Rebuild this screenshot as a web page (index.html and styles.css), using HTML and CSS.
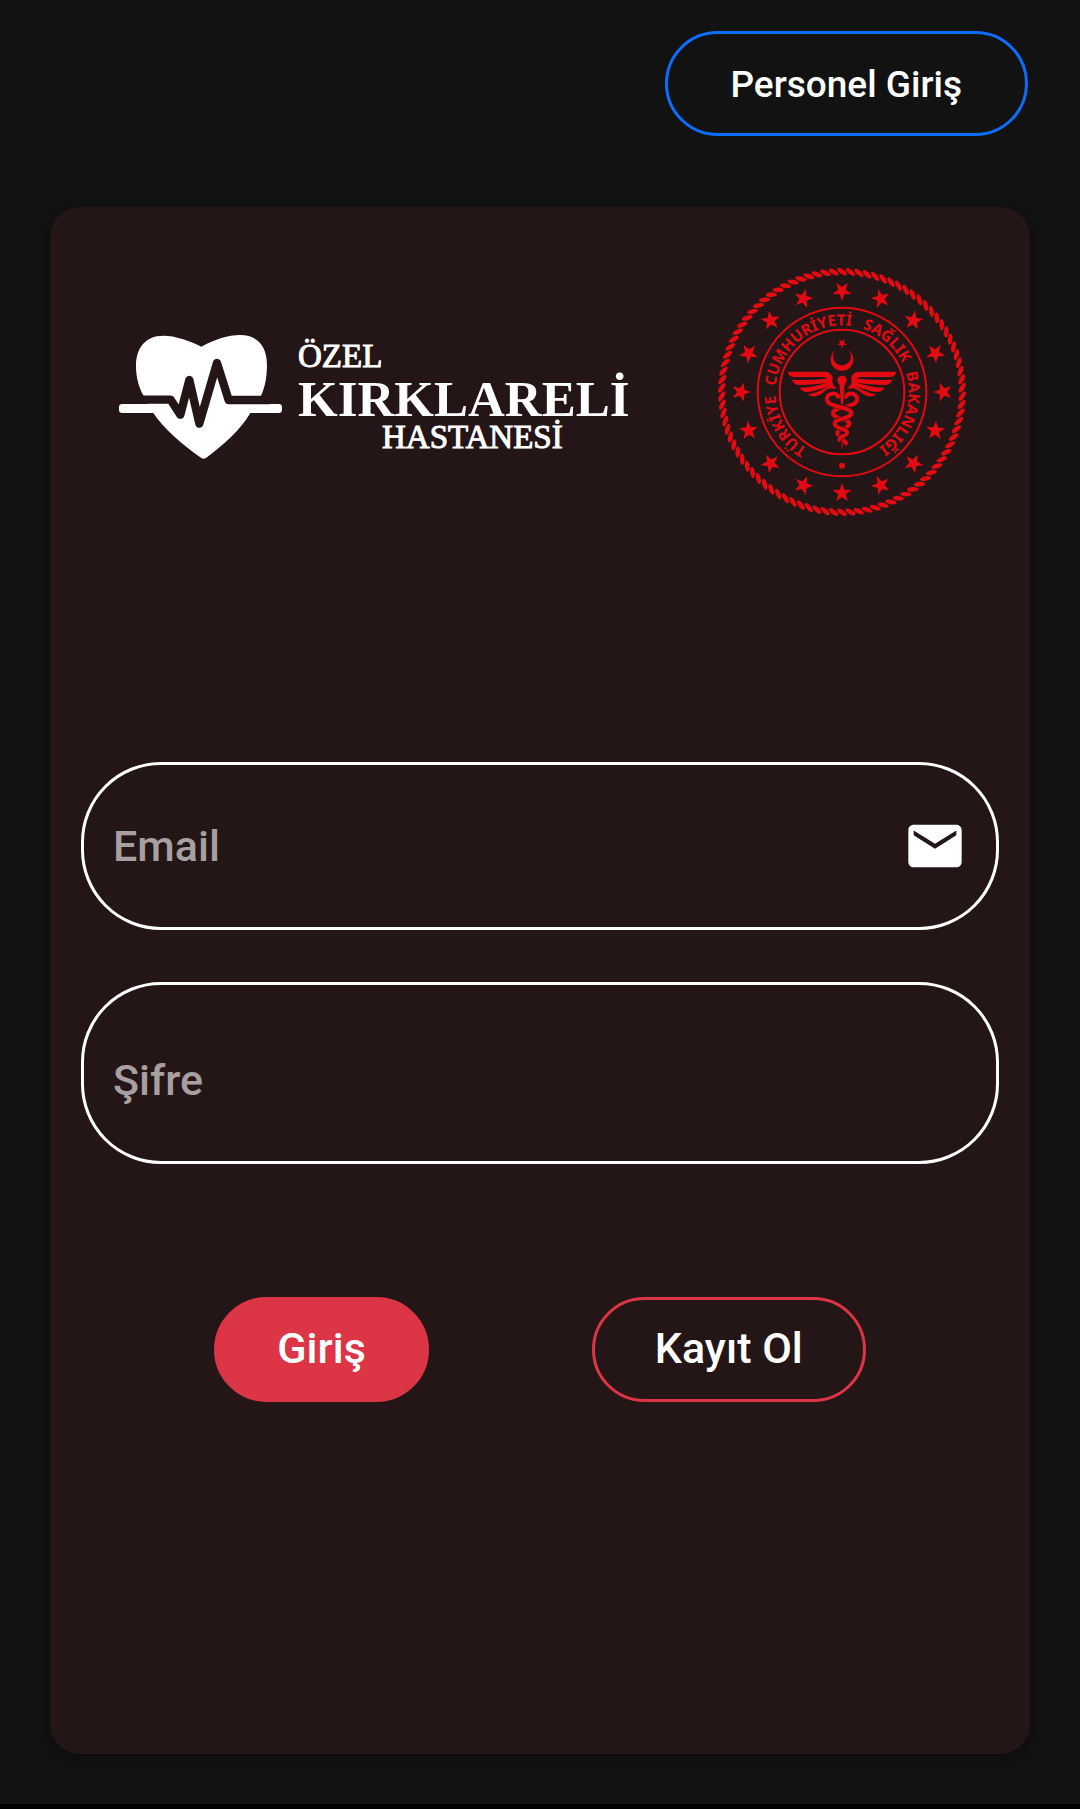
FILE: index.html
```html
<!DOCTYPE html>
<html lang="tr">
<head>
<meta charset="utf-8">
<meta name="viewport" content="width=device-width, initial-scale=1">
<title>Özel Kırklareli Hastanesi</title>
<link rel="stylesheet" href="styles.css">
</head>
<body>
<div class="page">
  <header class="topbar">
    <button type="button" class="btn btn-staff">Personel Giriş</button>
  </header>
  <main class="card">
    <div class="logos">
      <svg class="hospital-logo" viewBox="0 0 520 135" role="img" aria-label="Özel Kırklareli Hastanesi">
        <g transform="translate(-18 -15) scale(.3333)">
          <path fill="#fff" d="M304 110C270 92 225 77 190 77C135 77 108 115 108 168C108 200 116 232 130 256L160 309C190 355 245 402 304 444Q311 449 318 444C370 405 422 360 451 309L481 262C495 235 501 200 501 165C501 108 472 75 420 75C385 75 345 88 304 110Z"/>
          <rect x="57" y="282" width="489" height="27" rx="10" fill="#fff"/>
          <path class="pulse" d="M90 269H212L241 314L268 210L298 341L351 159L386 270H510"/>
        </g>
        <text class="word word-small" x="180" y="42">ÖZEL</text>
        <text class="word word-large" x="180" y="91">KIRKLARELİ</text>
        <text class="word word-small" x="264" y="123">HASTANESİ</text>
      </svg>
      <svg class="ministry-logo" viewBox="-372 -372 744 744" role="img" aria-label="Türkiye Cumhuriyeti Sağlık Bakanlığı">
        <defs>
          <path id="star" d="M0 30L-7 9.600L-28.500 9.300L-11.400 -3.700L-17.600 -24.300L0 -12L17.600 -24.300L11.400 -3.700L28.500 9.300L7 9.600Z"/>
          <ellipse id="strand" cx="0" cy="-361" rx="17" ry="7" transform="rotate(34 0 -361)"/>
          <g id="rope">
            <use href="#strand"/>
            <use href="#strand" transform="rotate(4)"/>
            <use href="#strand" transform="rotate(8)"/>
            <use href="#strand" transform="rotate(12)"/>
            <use href="#strand" transform="rotate(16)"/>
            <use href="#strand" transform="rotate(20)"/>
            <use href="#strand" transform="rotate(24)"/>
            <use href="#strand" transform="rotate(28)"/>
            <use href="#strand" transform="rotate(32)"/>
            <use href="#strand" transform="rotate(36)"/>
          </g>
          <g id="stars">
            <use href="#star" y="-303"/>
            <use href="#star" y="-303" transform="rotate(22.500)"/>
            <use href="#star" y="-303" transform="rotate(45)"/>
            <use href="#star" y="-303" transform="rotate(67.500)"/>
          </g>
          <g id="wing">
            <path d="M-163 -61H-52C-36 -60 -27 -50 -28 -40C-32 -28 -24 -16 -14 -11C-24 -8 -34 -10 -40 -20L-50 -45H-145Q-160 -46 -163 -61Z"/>
            <path d="M-151 -37Q-100 -34 -50 -40L-36 -28C-70 -26 -100 -21 -128 -21Q-144 -22 -151 -37Z"/>
            <path d="M-127 -13C-95 -14 -70 -20 -42 -28L-32 -18C-60 -12 -85 -1 -105 0Q-120 0 -127 -13Z"/>
            <path d="M-102 7C-80 4 -60 -6 -38 -19L-22 -11C-40 -12 -48 -6 -60 4C-72 14 -90 17 -102 7Z"/>
          </g>
          <path id="ring-text" d="M0 200A200 200 0 0 1 0 -200A200 200 0 0 1 0 200"/>
        </defs>
        <g class="red">
          <use href="#rope"/>
          <use href="#rope" transform="rotate(40)"/>
          <use href="#rope" transform="rotate(80)"/>
          <use href="#rope" transform="rotate(120)"/>
          <use href="#rope" transform="rotate(160)"/>
          <use href="#rope" transform="rotate(200)"/>
          <use href="#rope" transform="rotate(240)"/>
          <use href="#rope" transform="rotate(280)"/>
          <use href="#rope" transform="rotate(320)"/>
          <use href="#stars"/>
          <use href="#stars" transform="rotate(90)"/>
          <use href="#stars" transform="rotate(180)"/>
          <use href="#stars" transform="rotate(270)"/>
          <circle class="ring" r="253"/>
          <circle class="ring" r="187"/>
          <circle cy="221" r="9"/>
          <text class="ring-label"><textPath href="#ring-text" startOffset="110">TÜRKİYE</textPath></text>
          <text class="ring-label"><textPath href="#ring-text" startOffset="332">CUMHURİYETİ</textPath></text>
          <text class="ring-label"><textPath href="#ring-text" startOffset="690">SAĞLIK</textPath></text>
          <text class="ring-label"><textPath href="#ring-text" startOffset="883">BAKANLIĞI</textPath></text>
          <use href="#star" transform="translate(0 -146) scale(.5)"/>
          <path d="M-19 -126A34 34 0 1 0 19 -126A27 27 0 1 1 -19 -126Z"/>
          <use href="#wing"/>
          <use href="#wing" transform="scale(-1 1)"/>
          <circle cy="-35" r="14"/>
          <path d="M-8 -28L-3 42H3L8 -28Z"/>
          <path d="M-2 140H2L1 171H-1Z"/>
        </g>
        <path class="snake" d="M12 14C20 -2 47 4 45 24C42 48 -27 42 -27 64C-26 82 23 78 22 96C20 112 -15 108 -14 123C-12 138 6 140 12 154"/>
        <path class="snake-gap" d="M-18 40C0 48 28 48 28 64C26 82 -23 78 -22 96C-20 112 17 108 15 123C13 135 -8 130 -8 143"/>
        <path class="snake" d="M-12 14C-20 -2 -47 4 -45 24C-42 48 28 42 28 64C26 82 -23 78 -22 96C-20 112 17 108 15 123C13 135 -8 130 -8 143"/>
      </svg>
    </div>
    <form class="login">
      <label class="field field-email">
        <input class="input" type="email" placeholder="Email" aria-label="Email">
        <svg class="mail-icon" viewBox="0 0 24 24" aria-hidden="true"><path fill="#fff" d="M20 4H4c-1.100 0-1.990.900-1.990 2L2 18c0 1.100.900 2 2 2h16c1.100 0 2-.900 2-2V6c0-1.100-.900-2-2-2zm0 4l-8 5-8-5V6.200l8 5 8-5z"/></svg>
      </label>
      <label class="field field-password">
        <input class="input" type="password" placeholder="Şifre" aria-label="Şifre">
      </label>
      <div class="actions">
        <button type="submit" class="btn btn-login">Giriş</button>
        <button type="button" class="btn btn-register">Kayıt Ol</button>
      </div>
    </form>
  </main>
</div>
</body>
</html>
```
FILE: styles.css
```css
:root {
  --card: #241617;
  --red: #dc3545;
  --emblem: #e30a12;
}

* {
  box-sizing: border-box;
}

html {
  background: #000;
}

body {
  margin: 0;
  font-family: Roboto, sans-serif;
  font-weight: 500;
  color: #fff;
}

.page {
  display: flex;
  flex-direction: column;
  min-height: calc(100vh - 5px);
  padding: 31px 50px 50px;
  background: #121212;
}

.topbar {
  display: flex;
  justify-content: flex-end;
  padding-right: 2px;
  margin-bottom: 71px;
}

.btn {
  height: 105px;
  padding: 0 60px 3px;
  border: 3px solid transparent;
  border-radius: 53px;
  background: transparent;
  color: #fff;
  font-family: inherit;
  font-weight: 500;
  font-size: 43px;
  line-height: 48px;
  white-space: nowrap;
}

.btn-staff {
  padding: 2px 63px 0 62px;
  border-color: #0d6efd;
  font-size: 37px;
}

.btn-login {
  background: var(--red);
  border-color: var(--red);
}

.btn-register {
  border-color: var(--red);
}

.card {
  flex: 1;
  padding: 61px 31px;
  border-radius: 30px;
  background: var(--card);
  box-shadow: 0 4px 12px rgba(0, 0, 0, 0.3);
}

.logos {
  display: flex;
  align-items: center;
  justify-content: space-between;
  gap: 24px;
  padding: 0 33px 0 37px;
}

.hospital-logo {
  flex: 0 1 520px;
  min-width: 0;
}

.ministry-logo {
  flex: 0 1 248px;
  min-width: 0;
}

.pulse {
  fill: none;
  stroke: var(--card);
  stroke-width: 25px;
  stroke-linejoin: round;
}

.word {
  fill: #fff;
  font-family: "Liberation Serif", serif;
}

.word-small {
  font-size: 33px;
  stroke: #fff;
  stroke-width: 1px;
}

.word-large {
  font-size: 51px;
  font-weight: 700;
}

.red {
  fill: var(--emblem);
}

.ring {
  fill: none;
  stroke: var(--emblem);
  stroke-width: 6px;
}

.ring-label {
  font-family: "Noto Sans", sans-serif;
  font-size: 46px;
  font-weight: 700;
}

.snake,
.snake-gap {
  fill: none;
  stroke: var(--emblem);
  stroke-width: 12px;
  stroke-linecap: round;
}

.snake-gap {
  stroke: var(--card);
  stroke-width: 17px;
}

.login {
  display: flex;
  flex-direction: column;
  gap: 52px;
  margin-top: 246px;
}

.field {
  display: flex;
  align-items: center;
  padding: 0 29px;
  border: 3px solid #fff;
  border-radius: 80px;
}

.field-email {
  height: 168px;
}

.field-password {
  height: 182px;
  padding-top: 14px;
}

.input {
  flex: 1;
  min-width: 0;
  padding: 0;
  border: 0;
  outline: 0;
  background: transparent;
  color: #fff;
  font: inherit;
  font-size: 43px;
  line-height: 48px;
}

.input::placeholder {
  color: #a79fa0;
  opacity: 1;
}

.mail-icon {
  width: 64px;
  height: 64px;
}

.actions {
  display: flex;
  flex-wrap: wrap;
  justify-content: center;
  gap: 32px 163px;
  margin-top: 81px;
}
```
